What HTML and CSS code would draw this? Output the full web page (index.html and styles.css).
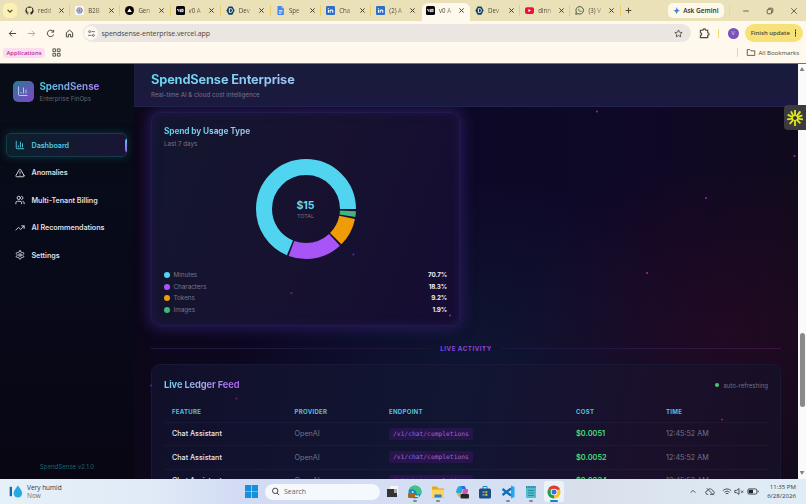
FILE: index.html
```
<!DOCTYPE html>
<html lang="en">
<head>
  <meta charset="UTF-8" />
  <meta name="viewport" content="width=device-width, initial-scale=1" />
  <title>SpendSense Enterprise</title>
  <link rel="stylesheet" href="styles.css">
</head>
<body>
  <!-- Shared icons -->
  <svg class="sprite" aria-hidden="true">
    <symbol id="close" viewBox="0 0 10 10"><path d="M2 2l6 6M8 2L2 8" /></symbol>
    <symbol id="v0" viewBox="0 0 24 24"><rect width="24" height="24" rx="4" fill="#050505" /><path d="M3 8l5 7V8M12 15V9h7v6h-7l7-6" fill="none" stroke="#fff" stroke-width="2.2" /></symbol>
    <symbol id="linkedin" viewBox="0 0 24 24"><rect width="24" height="24" rx="3" fill="#2f6fc9" /><path d="M6.500 10v8M6.500 5v2.500M11 18v-8M11 14c0-4 7-5 7 0v4" fill="none" stroke="#fff" stroke-width="2.800" /></symbol>
    <symbol id="devpost" viewBox="0 0 24 24"><path d="M7 1h10l6 11-6 11H7L1 12z" fill="#123f60" /><path d="M9 7v10h3c7 0 7-10 0-10z" fill="none" stroke="#fff" stroke-width="2.500" /></symbol>
    <symbol id="chart" viewBox="0 0 24 24"><path d="M3 3v16a2 2 0 0 0 2 2h16M8 17v-3M13 17V5M18 17V9" /></symbol>
  </svg>

  <header class="browser">
    <div class="tab-strip">
      <div class="tab-search"><svg viewBox="0 0 10 10"><path d="M2 3.500l3 3 3-3" /></svg></div>
      <div class="tab"><svg class="favicon" viewBox="0 0 24 24"><path fill="#222" d="M12 1a11.500 11.500 0 0 0-4 22c1 0 1-1 1-3-4 1-4-2-5-3 2-.5 2 2 5 1 0-1 .5-2 1-2-4-.5-6-2-5.500-7 0-1 .5-2 1-2.500-.5-1-.5-2 0-3.500 2 0 3 1 4 1.500h5c1-.5 2-1.500 4-1.500.5 1.500.5 2.500 0 3.500.5.500 1 1.500 1 2.500 0 5-2 6.500-5.500 7 1 .5 1 2 1 3v3c0 1 0 1 1 1A11.500 11.500 0 0 0 12 1z" /></svg><span>redd</span><svg class="x"><use href="#close" /></svg></div>
      <div class="tab"><svg class="favicon" viewBox="0 0 24 24"><rect width="24" height="24" rx="5" fill="#f8f8f6" /><circle cx="12" cy="12" r="7" fill="#bfc1de" stroke="#716e91" stroke-width="3" stroke-dasharray="3 1" /><circle cx="12" cy="12" r="2.500" fill="#716e91" /></svg><span>B2B</span><svg class="x"><use href="#close" /></svg></div>
      <div class="tab"><svg class="favicon" viewBox="0 0 24 24"><circle cx="12" cy="12" r="12" fill="#050505" /><path d="M12 6l6 10H6z" fill="#fff" /></svg><span>Gen</span><svg class="x"><use href="#close" /></svg></div>
      <div class="tab"><svg class="favicon"><use href="#v0" /></svg><span>v0 A</span><svg class="x"><use href="#close" /></svg></div>
      <div class="tab"><svg class="favicon"><use href="#devpost" /></svg><span>Dev</span><svg class="x"><use href="#close" /></svg></div>
      <div class="tab"><svg class="favicon" viewBox="0 0 24 24"><path d="M4 0h11l6 6v18H4z" fill="#4387f5" /><path d="M15 0v6h6" fill="#a6c6fc" /><path d="M8 12h9M8 16h9M8 20h5" stroke="#fff" stroke-width="2" /></svg><span>Spe</span><svg class="x"><use href="#close" /></svg></div>
      <div class="tab"><svg class="favicon"><use href="#linkedin" /></svg><span>Cha</span><svg class="x"><use href="#close" /></svg></div>
      <div class="tab before-active"><svg class="favicon"><use href="#linkedin" /></svg><span>(2) A</span><svg class="x"><use href="#close" /></svg></div>
      <div class="tab active"><svg class="favicon"><use href="#v0" /></svg><span>v0 A</span><svg class="x"><use href="#close" /></svg></div>
      <div class="tab"><svg class="favicon"><use href="#devpost" /></svg><span>Dev</span><svg class="x"><use href="#close" /></svg></div>
      <div class="tab"><svg class="favicon" viewBox="0 0 24 24"><rect y="3" width="24" height="18" rx="5" fill="#f20d3c" /><path d="M9 8l7 4-7 4z" fill="#fff" /></svg><span>dinn</span><svg class="x"><use href="#close" /></svg></div>
      <div class="tab"><svg class="favicon" viewBox="0 0 24 24" fill="none" stroke="#39ad55" stroke-width="2.500"><path d="M2 22l1.500-6A10 10 0 1 1 8 20.500z" /><path d="M8 7c-1 4 4 10 9 9l1-2-3-2-1.500 1c-1.500-.5-2-1.500-2.500-2.500L12 9l-1-2z" fill="#39ad55" stroke="none" /></svg><span>(3) V</span><svg class="x"><use href="#close" /></svg></div>
      <svg class="new-tab" viewBox="0 0 10 10"><path d="M5 1v8M1 5h8" /></svg>
      <div class="gemini"><svg viewBox="0 0 24 24"><path fill="#4686f4" d="M12 0c1 8 4 11 12 12-8 1-11 4-12 12C11 16 8 13 0 12 8 11 11 8 12 0z" /><path fill="#8d6bd1" d="M12 0c1 8 4 11 12 12H12z" /><path fill="#36a563" d="M12 24c-1-8-4-11-12-12h12z" /><circle cx="12" cy="12" r="4" fill="#4686f4" /></svg>Ask Gemini</div>
      <i class="strip-line"></i>
      <div class="window-buttons">
        <svg viewBox="0 0 10 10"><path d="M1.500 5h7" /></svg>
        <svg viewBox="0 0 10 10"><rect x="1.500" y="3" width="5.500" height="5.500" rx="1" /><path d="M3.500 3V1.500h4a1 1 0 0 1 1 1v4H7" /></svg>
        <svg viewBox="0 0 10 10"><path d="M1.500 1.500l7 7M8.500 1.500l-7 7" /></svg>
      </div>
    </div>

    <div class="toolbar">
      <div class="nav-buttons">
        <svg viewBox="0 0 10 10"><path d="M9 5H1.500M4.500 1.800L1.500 5l3 3.200" /></svg>
        <svg class="muted" viewBox="0 0 10 10"><path d="M1 5h7.500M5.500 1.800l3 3.200-3 3.200" /></svg>
        <svg viewBox="0 0 10 10"><path d="M8.500 6A3.600 3.600 0 1 1 8 2.800M8.500 1v2.500H6" /></svg>
        <svg viewBox="0 0 10 10"><path d="M1.500 4.200L5 1.300l3.500 2.900v4.600H6.200V6H3.800v2.800H1.500z" /></svg>
      </div>
      <div class="address">
        <span class="site-info"><svg viewBox="0 0 12 12"><circle cx="3.500" cy="3.500" r="1.300" /><path d="M6 3.500h4.500M1.500 8.500H6" /><circle cx="8.500" cy="8.500" r="1.300" /></svg></span>
        <span class="url">spendsense-enterprise.vercel.app</span>
        <svg class="star" viewBox="0 0 24 24"><path d="M12 2.500l2.900 6.200 6.800.8-5 4.700 1.300 6.700-6-3.400-6 3.400 1.300-6.700-5-4.700 6.800-.8z" /></svg>
      </div>
      <svg class="puzzle" viewBox="0 0 12 12"><path d="M1.500 2.500h2.800c0-2 3-2 3 0h2.200v2.700c2 0 2 2.800 0 2.800v2.500h-8V8c2 0 2-2.800 0-2.800z" /></svg>
      <i class="strip-line"></i>
      <span class="avatar">V</span>
      <span class="update">Finish update <b></b></span>
    </div>

    <div class="bookmarks">
      <span class="applications">Applications</span>
      <svg class="apps" viewBox="0 0 10 10"><path d="M1 1h3v3H1zM6 1h3v3H6zM1 6h3v3H1zM6 6h3v3H6z" /></svg>
      <i class="strip-line"></i>
      <svg class="folder" viewBox="0 0 12 10"><path d="M1.500 1.500h3L6 3h4.500v5.500h-9z" /></svg>
      <span class="all">All Bookmarks</span>
    </div>
  </header>

  <div class="app">
    <aside class="sidebar">
      <div class="brand">
        <span class="logo"><svg><use href="#chart" /></svg></span>
        <div>
          <h2>SpendSense</h2>
          <p>Enterprise FinOps</p>
        </div>
      </div>
      <nav>
        <a class="active"><svg><use href="#chart" /></svg>Dashboard</a>
        <a><svg viewBox="0 0 24 24"><path d="M21.700 18l-8-14a2 2 0 0 0-3.500 0l-8 14A2 2 0 0 0 4 21h16a2 2 0 0 0 1.700-3zM12 9v4M12 17v.2" /></svg>Anomalies</a>
        <a><svg viewBox="0 0 24 24"><path d="M16 21v-2a4 4 0 0 0-4-4H6a4 4 0 0 0-4 4v2M22 21v-2a4 4 0 0 0-3-3.900M16 3.100a4 4 0 0 1 0 7.800" /><circle cx="9" cy="7" r="4" /></svg>Multi-Tenant Billing</a>
        <a><svg viewBox="0 0 24 24"><path d="M22 7l-8.500 8.500-5-5L2 17M16 7h6v6" /></svg>AI Recommendations</a>
        <a><svg viewBox="0 0 24 24"><path d="M12.200 2h-.4a2 2 0 0 0-2 2v.2a2 2 0 0 1-1 1.700l-.4.300a2 2 0 0 1-2 0l-.2-.1a2 2 0 0 0-2.700.7l-.2.400a2 2 0 0 0 .7 2.700l.2.100a2 2 0 0 1 1 1.700v.5a2 2 0 0 1-1 1.700l-.2.100a2 2 0 0 0-.7 2.700l.2.400a2 2 0 0 0 2.700.7l.2-.1a2 2 0 0 1 2 0l.4.300a2 2 0 0 1 1 1.700v.2a2 2 0 0 0 2 2h.4a2 2 0 0 0 2-2v-.2a2 2 0 0 1 1-1.700l.4-.3a2 2 0 0 1 2 0l.2.100a2 2 0 0 0 2.700-.7l.2-.4a2 2 0 0 0-.7-2.700l-.2-.1a2 2 0 0 1-1-1.700v-.5a2 2 0 0 1 1-1.700l.2-.1a2 2 0 0 0 .7-2.700l-.2-.4a2 2 0 0 0-2.700-.7l-.2.100a2 2 0 0 1-2 0l-.4-.3a2 2 0 0 1-1-1.700V4a2 2 0 0 0-2-2z" /><circle cx="12" cy="12" r="3" /></svg>Settings</a>
      </nav>
      <footer>SpendSense v2.1.0</footer>
    </aside>

    <main>
      <header class="page-header">
        <h1>SpendSense Enterprise</h1>
        <p>Real-time AI &amp; cloud cost intelligence</p>
      </header>

      <div class="content">
        <section class="usage-card">
          <h3>Spend by Usage Type</h3>
          <p class="sub">Last 7 days</p>
          <div class="donut">
            <svg viewBox="0 0 100 100">
              <circle class="minutes" cx="50" cy="50" r="42" pathLength="360" />
              <circle class="characters" cx="50" cy="50" r="42" pathLength="360" />
              <circle class="tokens" cx="50" cy="50" r="42" pathLength="360" />
              <circle class="images" cx="50" cy="50" r="42" pathLength="360" />
            </svg>
            <div class="total"><strong>$15</strong><span>TOTAL</span></div>
          </div>
          <ul class="legend">
            <li><i class="minutes"></i>Minutes<b>70.7%</b></li>
            <li><i class="characters"></i>Characters<b>18.3%</b></li>
            <li><i class="tokens"></i>Tokens<b>9.2%</b></li>
            <li><i class="images"></i>Images<b>1.9%</b></li>
          </ul>
        </section>

        <div class="section-title"><span>LIVE ACTIVITY</span></div>

        <section class="ledger">
          <div class="ledger-head">
            <h3>Live Ledger Feed</h3>
            <span class="refresh">auto-refreshing</span>
          </div>
          <table>
            <thead>
              <tr><th>FEATURE</th><th>PROVIDER</th><th>ENDPOINT</th><th>COST</th><th>TIME</th></tr>
            </thead>
            <tbody>
              <tr><td>Chat Assistant</td><td>OpenAI</td><td><code>/v1/chat/completions</code></td><td>$0.0051</td><td>12:45:52 AM</td></tr>
              <tr><td>Chat Assistant</td><td>OpenAI</td><td><code>/v1/chat/completions</code></td><td>$0.0052</td><td>12:45:52 AM</td></tr>
              <tr><td>Chat Assistant</td><td>OpenAI</td><td><code>/v1/chat/completions</code></td><td>$0.0034</td><td>12:45:52 AM</td></tr>
            </tbody>
          </table>
        </section>
      </div>

      <!-- Floating particles -->
      <svg class="particles" viewBox="0 0 664 415">
        <g fill="#a02a9c">
          <circle cx="463" cy="47.500" r="1" fill="#b51f63" />
          <circle cx="660.500" cy="92" r="1" />
          <circle cx="572" cy="134" r="1" />
          <circle cx="513" cy="209" r="1" />
          <circle cx="219.500" cy="190.500" r="1" fill="#6b2aa8" />
          <circle cx="157.500" cy="229" r="1" fill="#8e2158" />
          <circle cx="316" cy="251.500" r="1" />
          <circle cx="350" cy="283.500" r="1" />
          <circle cx="17" cy="321.500" r="1" fill="#5525b5" />
          <circle cx="102.500" cy="334.500" r="1" fill="#74205d" />
          <circle cx="588" cy="355.500" r="1" fill="#a01d62" />
        </g>
      </svg>
    </main>

    <div class="scrollbar"><i class="up"></i><i class="thumb"></i><i class="down"></i></div>
    <div class="extension">
      <svg viewBox="-12 -12 24 24"><path d="M0-3v-9M2-2l6-8M3-1l8-3M3 1l9 1M2 2l6 6M0 3v9M-2 2l-6 7M-3 1l-9 1M-3-1l-8-4M-2-2l-4-8" /></svg>
    </div>
  </div>

  <footer class="taskbar">
    <div class="weather">
      <svg viewBox="0 0 14 16"><path d="M1.500 3v10" stroke="#1766a8" stroke-width="2.500" /><path d="M9 1.500c3 4 4.500 6 4.500 8.500a4.300 4.300 0 0 1-9 0C4.500 7.500 6 5.500 9 1.500z" fill="#28a8e0" /></svg>
      <p>Very humid<span>Now</span></p>
    </div>
    <div class="dock">
      <svg class="start" viewBox="0 0 12 12"><path d="M0 0h5.700v5.700H0zM6.300 0H12v5.700H6.300zM0 6.300h5.700V12H0zM6.300 6.300H12V12H6.300z" fill="#168fdc" /></svg>
      <div class="search"><svg viewBox="0 0 10 10"><circle cx="5.300" cy="4.300" r="3" /><path d="M3.200 6.600L1 9" /></svg>Search</div>
      <span class="task"><svg viewBox="0 0 14 14"><path d="M5 1h8v9H5z" fill="#f5f5f5" /><path d="M2 4h8v4h2v4H2z" fill="#333" /><path d="M9 4h3v4H9z" fill="#aaa" /></svg></span>
      <span class="task open"><svg viewBox="0 0 14 14"><circle cx="7" cy="7" r="6.500" fill="#1485cf" /><path d="M1 5a6.500 6.500 0 0 1 12.500 2c0 3-4 3-5 1.500C9 5 4 3 1 5z" fill="#42c778" /><path d="M5 6c-2 4 2 6 6 5" fill="none" stroke="#bfeaf7" stroke-width="1.500" /><rect x="0" y="8" width="7" height="5" rx="1" fill="#aa681f" /></svg></span>
      <span class="task open"><svg viewBox="0 0 14 14"><path d="M1 1.500h5l1.500 2H13v9H1z" fill="#e6a51f" /><rect x="1" y="4.500" width="12" height="8" rx="1" fill="#ffd45b" /><path d="M3.500 9.500h7v3h-7z" fill="#2382ca" /></svg></span>
      <span class="task"><svg viewBox="0 0 14 14"><path d="M1 6.500C2 3 3 1 5 1h4L6.500 8H3C1.500 8 1 7.500 1 6.500z" fill="#28a9dc" /><path d="M6 1h3c1.500 0 1.500 2 2 3H7z" fill="#3867dc" /><path d="M8.500 4H12c2 0 1 3 0 5.500-.5 1.500-1.500 2.500-3 2.500H6z" fill="#d553b5" /><path d="M1.500 8H6l-1 4c-2 0-2-2-3.500-4z" fill="#e9ad35" /><rect x="5.500" y="9" width="8.500" height="4.500" rx="1" fill="#27272a" /></svg></span>
      <span class="task"><svg viewBox="0 0 14 14"><path d="M5 4V1.500h4V4" fill="none" stroke="#188bc6" /><rect x="1" y="3.500" width="12" height="10" rx="1.500" fill="#174f83" /><path d="M4.500 6h2v2h-2z" fill="#ee6040" /><path d="M7.300 6h2v2h-2z" fill="#8ac246" /><path d="M4.500 8.800h2v2h-2z" fill="#39aae7" /><path d="M7.300 8.800h2v2h-2z" fill="#f4c340" /></svg></span>
      <span class="task open"><svg viewBox="0 0 14 14"><path d="M10 .5l3.500 1.500v10L10 13.500z" fill="#25a7f0" /><path d="M10 3.500L1.500 10M10 10.500L1.500 4" stroke="#0872bd" stroke-width="2.300" /></svg></span>
      <span class="task open"><svg viewBox="0 0 14 14"><rect x="2" y="1" width="10" height="12" rx="1" fill="#52bccb" /><path d="M2 2h10" stroke="#2a7185" stroke-width="1.500" stroke-dasharray="1 .7" /><path d="M4 5.500h6M4 8h6M4 10.500h6" stroke="#207f9e" stroke-width=".8" /></svg></span>
      <span class="task current"><svg viewBox="0 0 14 14"><path d="M7 7L1.400 3.700a6.500 6.500 0 0 1 11.200 0z" fill="#e33b2e" /><path d="M7 7l5.600-3.300A6.500 6.500 0 0 1 7 13.500z" fill="#f9c41c" /><path d="M7 7v6.500A6.500 6.500 0 0 1 1.400 3.700z" fill="#269b4b" /><path d="M7 4h5.800" stroke="#e33b2e" stroke-width="1" /><circle cx="7" cy="7" r="3.300" fill="#fff" /><circle cx="7" cy="7" r="2.500" fill="#2f74e3" /></svg></span>
    </div>
    <div class="tray">
      <svg class="caret" viewBox="0 0 10 10"><path d="M2 6.500l3-3 3 3" /></svg>
      <svg class="cloud" viewBox="0 0 12 10"><path d="M4 8.500H3a2.200 2.200 0 0 1 0-4.400C4 1 8 1 9 4c3 .5 2.500 4.500 0 4.500H6M2 1l8.500 8.500" /></svg>
      <svg class="wifi" viewBox="0 0 12 10"><path d="M1 4a7 7 0 0 1 10 0M2.800 6a4.500 4.500 0 0 1 6.400 0M4.500 7.800a2.200 2.200 0 0 1 3 0" /></svg>
      <svg class="volume" viewBox="0 0 12 10"><path d="M1 3.700h2L6 1.500v7L3 6.300H1zM8.500 4l2.500 2.500M11 4L8.500 6.500" /></svg>
      <svg class="battery" viewBox="0 0 14 10"><rect x="1" y="2" width="10.500" height="6" rx="1.500" /><path d="M2 3h5v4H2z" fill="#222" /><path d="M13 4v2" /></svg>
      <p class="clock">11:35 PM<br>6/28/2026</p>
    </div>
  </footer>
</body>
</html>
```
FILE: styles.css
```
* {
  box-sizing: border-box;
}
body {
  margin: 0;
  width: 806px;
  height: 504px;
  overflow: hidden;
  display: flex;
  flex-direction: column;
  font-family: "Open Sans", sans-serif;
  font-size: 6.5px;
  color: #4b4738;
  background: #fef8ed;
}
h1, h2, h3, p, ul {
  margin: 0;
  padding: 0;
}
svg {
  display: block;
  flex: none;
  fill: none;
  stroke: currentColor;
}
svg [fill]:not([stroke]) {
  stroke: none;
}
.sprite {
  position: absolute;
  width: 0;
  height: 0;
}

/* Browser window */
.browser {
  height: 64px;
  flex: none;
  border-bottom: 1px solid #77727a;
}
.tab-strip {
  height: 21px;
  display: flex;
  align-items: center;
  background: #ebe1b8;
}
.tab-search {
  width: 14px;
  height: 15px;
  margin: 0 3px;
  border-radius: 5px;
  background: #fdf0b5;
  display: flex;
  align-items: center;
  justify-content: center;
}
.tab-search svg {
  width: 8px;
  height: 8px;
  stroke-width: 1.5;
}
.tab {
  width: 50.2px;
  height: 21px;
  padding-left: 5px;
  display: flex;
  align-items: center;
}
.tab::after {
  content: "";
  width: 1px;
  height: 11px;
  background: #e8d16c;
  margin-left: 4.5px;
}
.tab.active::after,
.tab.before-active::after {
  visibility: hidden;
}
.tab span {
  width: 15px;
  margin: 0 5px 0 4px;
  white-space: nowrap;
  font-size: 6.2px;
  -webkit-mask-image: linear-gradient(90deg, #000 40%, rgba(0, 0, 0, 0.3));
  mask-image: linear-gradient(90deg, #000 40%, rgba(0, 0, 0, 0.3));
}
.favicon {
  width: 9px;
  height: 9px;
}
.x {
  width: 7px;
  height: 7px;
  stroke-width: 1.4;
  color: #3e3a2c;
}
.tab.active {
  height: 18px;
  margin-top: 3px;
  background: #fef8ed;
  border-radius: 6px 6px 0 0;
  width: 48px;
  margin-left: 0.5px;
  padding: 0 0 3px 4px;
}
.new-tab {
  width: 7px;
  height: 7px;
  margin-left: 4.5px;
  stroke-width: 1.4;
}
.gemini {
  width: 56px;
  height: 15px;
  margin-left: 35.5px;
  border-radius: 5px;
  background: #fef8e8;
  display: flex;
  align-items: center;
  justify-content: center;
  gap: 3px;
  font-weight: 600;
  color: #302d25;
  white-space: nowrap;
}
.gemini svg {
  width: 7.5px;
  height: 7.5px;
}
.strip-line {
  width: 1px;
  height: 9px;
  background: #f0da6d;
}
.tab-strip > .strip-line {
  margin-left: 5px;
}
.window-buttons {
  display: flex;
  gap: 16px;
  margin-left: 12px;
}
.window-buttons svg {
  width: 8px;
  height: 8px;
}
.toolbar {
  height: 24px;
  display: flex;
  align-items: center;
}
.nav-buttons {
  display: flex;
  gap: 10px;
  margin-left: 7.5px;
  width: 75.5px;
}
.nav-buttons svg {
  width: 9px;
  height: 9px;
  stroke-width: 1.1;
}
.nav-buttons .muted {
  color: #b1aca1;
}
.address {
  width: 608px;
  height: 18px;
  border-radius: 9px;
  background: #ebe6e2;
  display: flex;
  align-items: center;
}
.site-info {
  width: 14px;
  height: 14px;
  margin-left: 1px;
  border-radius: 50%;
  background: #fdf9f2;
  display: flex;
  align-items: center;
  justify-content: center;
}
.site-info svg {
  width: 9px;
  height: 9px;
}
.url {
  margin-left: 3.5px;
  font-size: 7px;
  letter-spacing: -0.06px;
}
.star {
  width: 9px;
  height: 9px;
  margin: 0 8.5px 0 auto;
  stroke-width: 2.2;
}
.puzzle {
  width: 11px;
  height: 11px;
  margin: 0 8px 0 8px;
  stroke-width: 1.2;
}
.avatar {
  width: 11px;
  height: 11px;
  margin-left: 8.5px;
  border-radius: 50%;
  background: #7951bd;
  color: #e4d9f8;
  font-size: 6px;
  line-height: 11px;
  text-align: center;
}
.update {
  width: 58px;
  height: 18px;
  margin-left: 6px;
  border-radius: 9px;
  background: #f7e27a;
  display: flex;
  align-items: center;
  justify-content: center;
  gap: 5px;
  white-space: nowrap;
  font-size: 6px;
  font-weight: 600;
}
.update b {
  width: 1.5px;
  height: 1.5px;
  background: #39352a;
  box-shadow: 0 -2.5px #39352a, 0 2.5px #39352a;
}
.bookmarks {
  height: 15px;
  display: flex;
  align-items: center;
}
.applications {
  width: 42px;
  height: 10px;
  margin-left: 3px;
  border-radius: 3px;
  background: #fbdcf0;
  color: #b42d91;
  font-weight: 600;
  font-size: 5.9px;
  line-height: 10px;
  text-align: center;
}
.apps {
  width: 9px;
  height: 9px;
  margin: 0 auto 0 7px;
}
.folder {
  width: 10px;
  height: 9px;
  margin: 0 3px 0 8px;
}
.bookmarks .all {
  width: 47.5px;
  white-space: nowrap;
  font-size: 6.1px;
}

/* Dashboard */
.app {
  flex: 1;
  min-height: 0;
  display: flex;
  position: relative;
  overflow: hidden;
  font-family: Inter, sans-serif;
  background: #0e0927;
}
.sidebar {
  width: 134px;
  flex: none;
  display: flex;
  flex-direction: column;
  background: linear-gradient(180deg, #070d16, #08091a 55%, #080612);
}
.brand {
  height: 57px;
  padding: 0 0 2px 12.5px;
  display: flex;
  align-items: center;
  gap: 6px;
  border-bottom: 1px solid #0a101b;
}
.logo {
  width: 21px;
  height: 21px;
  border-radius: 5px;
  background: linear-gradient(135deg, #287b98, #8443c6);
  color: #b8c5e6;
  display: flex;
  align-items: center;
  justify-content: center;
}
.logo svg {
  width: 12px;
  height: 12px;
  stroke-width: 2;
}
.brand h2 {
  width: max-content;
  font-size: 9.8px;
  line-height: 13px;
  font-weight: 700;
  letter-spacing: -0.05px;
  background: linear-gradient(90deg, #52cce6, #a77bed);
  -webkit-background-clip: text;
  background-clip: text;
  color: transparent;
}
.brand p {
  margin-top: 1px;
  font-size: 6.1px;
  line-height: 9px;
  color: #64666f;
}
nav {
  padding: 12px 7px 0 6px;
}
nav a {
  height: 24px;
  margin-bottom: 3.4px;
  padding-left: 9px;
  display: flex;
  align-items: center;
  gap: 6.5px;
  font-size: 7.2px;
  font-weight: 600;
  letter-spacing: -0.05px;
  color: #dedfe4;
}
nav a + a {
  position: relative;
  top: 0.6px;
}
nav svg {
  width: 10px;
  height: 10px;
  stroke-width: 2.2;
  stroke-linecap: round;
  stroke-linejoin: round;
}
nav a.active {
  padding-left: 8px;
  border: 1px solid #173a4b;
  border-radius: 5px;
  background: linear-gradient(90deg, #0b202d, #1b1435);
  box-shadow: 0 0 8px #0d3340;
  color: #51cae1;
}
nav a.active::after {
  content: "";
  width: 2px;
  height: 13px;
  margin-left: auto;
  margin-right: -1px;
  border-radius: 2px 0 0 2px;
  background: linear-gradient(#4bcdea, #a855f7);
}
.sidebar footer {
  margin: auto 0 8px;
  font-size: 6.1px;
  line-height: 9px;
  text-align: center;
  color: #17656f;
}
main {
  width: 664px;
  position: relative;
  background:
    radial-gradient(ellipse 210px 180px at 590px 270px, rgba(48, 10, 35, 0.55), rgba(48, 10, 35, 0)),
    radial-gradient(ellipse 240px 200px at 345px 310px, rgba(14, 28, 55, 0.7), rgba(14, 28, 55, 0)),
    linear-gradient(90deg, #0c0719, #0d0828 35%, #0f0827 75%, #100a1d);
}
.page-header {
  height: 43px;
  padding: 8px 0 0 17px;
  position: relative;
  z-index: 1;
  background: linear-gradient(#181c3a, #1c1940);
  border-bottom: 1px solid #20234a;
}
h1 {
  font-size: 12.8px;
  line-height: 16px;
  font-weight: 700;
  letter-spacing: -0.15px;
  width: max-content;
  background: linear-gradient(90deg, #67d9ef, #a3c5f5);
  -webkit-background-clip: text;
  background-clip: text;
  color: transparent;
}
.page-header p,
.sub {
  font-size: 6.2px;
  line-height: 9px;
  color: #74758a;
}
.page-header p {
  margin-top: 1.500px;
}
.content {
  padding: 5px 17px 0;
}
.usage-card {
  width: 309px;
  height: 214px;
  padding: 12px 12px 0;
  border-radius: 9px;
  border: 1px solid #231a4c;
  background: linear-gradient(110deg, #131630, #17122f 50%, #160c33);
  box-shadow: 0 0 13px 3px #271a58, inset 0 0 8px #1e1748;
}
h3 {
  width: max-content;
  font-size: 8.3px;
  line-height: 12px;
  font-weight: 700;
  letter-spacing: -0.1px;
  background: linear-gradient(90deg, #57d3ec, #a5c7f2);
  -webkit-background-clip: text;
  background-clip: text;
  color: transparent;
}
.usage-card .sub {
  margin-top: 1.5px;
}
.donut {
  height: 100px;
  margin-top: 11.5px;
  display: grid;
  place-items: center;
}
.donut > * {
  grid-area: 1 / 1;
}
.donut svg {
  width: 100px;
  height: 100px;
}
.donut circle {
  stroke-width: 16;
}
circle.minutes {
  stroke: #50d4ef;
  stroke-dasharray: 248 360;
  stroke-dashoffset: -112.5;
}
circle.characters {
  stroke: #a855f7;
  stroke-dasharray: 63 360;
  stroke-dashoffset: -47.3;
}
circle.tokens {
  stroke: #f09b08;
  stroke-dasharray: 33.5 360;
  stroke-dashoffset: -11.5;
}
circle.images {
  stroke: #40b67e;
  stroke-dasharray: 6.6 360;
  stroke-dashoffset: -2.6;
}
.total {
  text-align: center;
}
.total strong {
  display: block;
  font-size: 10.5px;
  line-height: 13px;
  color: #68d8ef;
}
.total span {
  display: block;
  font-size: 5.3px;
  line-height: 8px;
  color: #747085;
}
.legend {
  margin-top: 10.5px;
  list-style: none;
}
.legend li {
  height: 11.5px;
  display: flex;
  align-items: center;
  font-size: 6.3px;
  color: #777587;
}
.legend i {
  width: 6px;
  height: 6px;
  margin-right: 3.5px;
  border-radius: 50%;
}
.legend b {
  margin-left: auto;
  font-weight: 700;
  font-size: 6.3px;
  letter-spacing: -0.15px;
  color: #eeedf4;
}
i.minutes { background: #50d4ef; }
i.characters { background: #a855f7; }
i.tokens { background: #f09b08; }
i.images { background: #40b67e; }
.section-title {
  height: 10px;
  margin: 17px 0 11px;
  display: flex;
  align-items: center;
  gap: 9px;
  font-size: 6.2px;
  font-weight: 700;
  letter-spacing: 0.5px;
  color: #8e43d4;
}
.section-title::before,
.section-title::after {
  content: "";
  flex: 1;
  height: 1px;
  background: linear-gradient(90deg, #251842, #1b1435);
}
.section-title::after {
  background: linear-gradient(90deg, #1b1740, #3a1544);
}
.ledger {
  height: 150px;
  padding: 12px 12px 0;
  border: 1px solid #1a1935;
  border-radius: 9px;
  background: linear-gradient(100deg, #11102b, #111633 48%, #1b102b 78%, #170f24);
}
.ledger-head {
  height: 16px;
  display: flex;
  align-items: center;
  justify-content: space-between;
}
.ledger h3 {
  font-size: 9.3px;
  background-image: linear-gradient(90deg, #6ad9ef, #a9a5ee 50%, #a75df0);
}
.refresh {
  display: flex;
  align-items: center;
  gap: 4px;
  font-size: 6.1px;
  color: #74707f;
}
.refresh::before {
  content: "";
  width: 4px;
  height: 4px;
  border-radius: 50%;
  background: #4ac87a;
}
table {
  width: 604px;
  margin-top: 8px;
  table-layout: fixed;
  border-collapse: collapse;
}
tr {
  height: 23.5px;
  border-bottom: 1px solid rgba(60, 60, 100, 0.18);
}
thead tr {
  height: 21px;
}
th, td {
  padding: 0 0 0 8px;
  text-align: left;
  font-size: 7.2px;
  font-weight: 400;
  color: #777482;
}
th {
  font-size: 6.1px;
  font-weight: 700;
  letter-spacing: 0.25px;
  color: #56bfd6;
}
th:nth-child(1) { width: 122.5px; }
th:nth-child(2) { width: 94.5px; }
th:nth-child(3) { width: 187px; }
th:nth-child(4) { width: 90px; }
td:first-child {
  font-weight: 500;
  color: #e8e7ee;
}
td:nth-child(4) {
  font-weight: 600;
  font-size: 7.4px;
  color: #4ade80;
}
code {
  display: inline-block;
  height: 12px;
  padding: 0 4px;
  border-radius: 2px;
  background: #26154a;
  color: #9965cf;
  font-family: "DejaVu Sans Mono", monospace;
  font-size: 6.3px;
  line-height: 12px;
  vertical-align: middle;
}
.particles {
  position: absolute;
  inset: 0;
  z-index: 2;
  width: 664px;
  height: 415px;
}
.scrollbar {
  width: 8px;
  padding: 3px 1.5px 4px;
  background: #fafafb;
  display: flex;
  flex-direction: column;
}
.scrollbar .up,
.scrollbar .down {
  width: 5px;
  height: 4px;
  background: #858589;
  clip-path: polygon(50% 0, 100% 100%, 0 100%);
}
.scrollbar .down {
  margin-top: auto;
  transform: scaleY(-1);
}
.scrollbar .thumb {
  width: 5px;
  height: 74px;
  margin-top: 262px;
  border-radius: 3px;
  background: #8a8a8d;
}
.extension {
  position: absolute;
  top: 41px;
  right: 0;
  z-index: 3;
  width: 22px;
  height: 25px;
  padding-right: 1px;
  border-radius: 4px 0 0 4px;
  background: #3b3a3e;
  color: #dce51f;
  display: flex;
  align-items: center;
  justify-content: center;
}
.extension svg {
  width: 16px;
  height: 16px;
  stroke-width: 2.8;
}

/* Windows taskbar */
.taskbar {
  height: 25px;
  flex: none;
  display: flex;
  align-items: center;
  color: #34363c;
  background: linear-gradient(90deg, #e5f0f9, #e1ebf7 18%, #d2dbf3 30%, #d6e0f4 65%, #d9e0eb 72%, #e0edf7);
}
.weather {
  width: 245px;
  padding-left: 9px;
  display: flex;
  align-items: center;
  gap: 4px;
  line-height: 8px;
}
.weather svg {
  width: 14px;
  height: 15px;
}
.weather svg path[fill] {
  stroke: none;
}
.weather span {
  display: block;
  color: #6c7077;
}
.dock {
  display: flex;
  align-items: center;
}
.start {
  width: 13px;
  height: 13px;
}
.search {
  width: 115px;
  height: 16px;
  margin: 0 2px 0 7px;
  padding-left: 6px;
  border-radius: 8px;
  background: #f5f8fd;
  display: flex;
  align-items: center;
  gap: 4px;
  font-size: 7px;
  color: #62656c;
}
.search svg {
  width: 9px;
  height: 9px;
  color: #333;
  transform: scaleX(-1);
}
.task {
  width: 20px;
  height: 21px;
  margin-right: 3.2px;
  padding-top: 4px;
  border-radius: 3px;
  display: flex;
  flex-direction: column;
  align-items: center;
}
.task svg {
  width: 14px;
  height: 14px;
}
.task.open::after,
.task.current::after {
  content: "";
  width: 4px;
  height: 1.5px;
  margin-top: 1px;
  border-radius: 1px;
  background: #85898f;
}
.task.current {
  background: #edf2fa;
}
.task.current::after {
  width: 8px;
  background: #1684cd;
}
.tray {
  flex: 1;
  padding-right: 10px;
  display: flex;
  align-items: center;
  justify-content: flex-end;
}
.tray svg {
  height: 9px;
}
.caret { width: 8px; margin-right: 8px; }
.cloud { width: 10px; margin-right: 7px; }
.wifi { width: 10px; margin-right: 2px; }
.volume { width: 10px; margin-right: 3px; }
.battery { width: 12px; }
.clock {
  width: 37px;
  text-align: right;
  line-height: 8.5px;
  font-size: 6.1px;
}
```
